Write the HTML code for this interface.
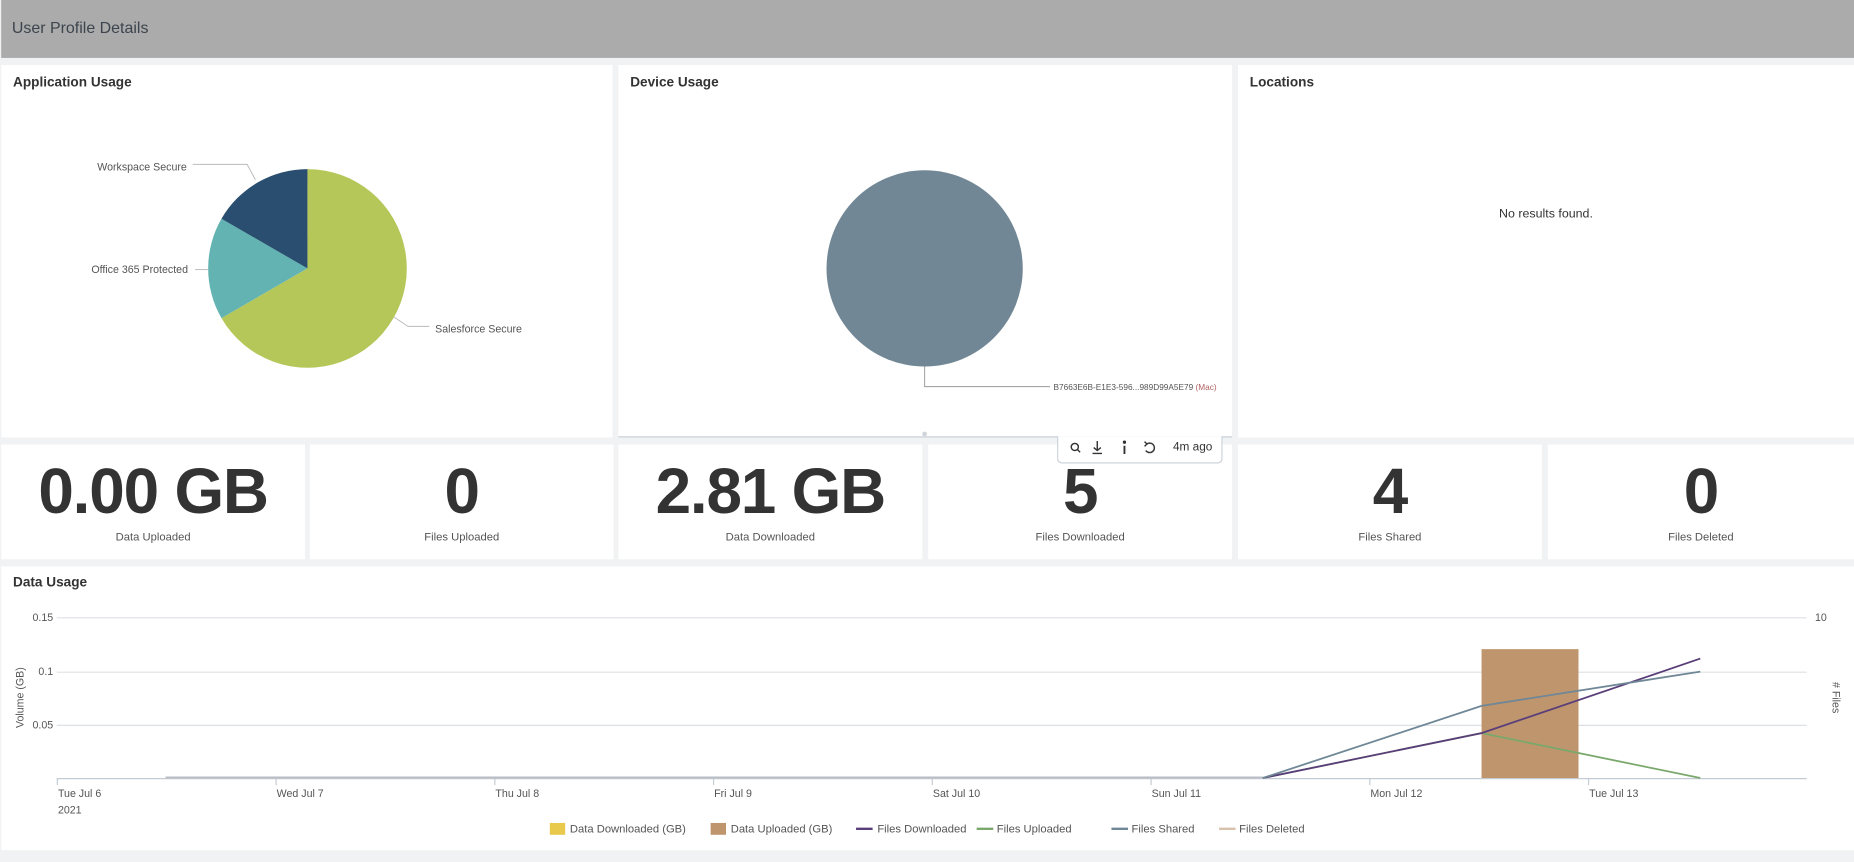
<!DOCTYPE html>
<html><head><meta charset="utf-8"><style>
html,body{margin:0;padding:0;width:1854px;height:862px;overflow:hidden;background:#f1f2f3;font-family:"Liberation Sans",sans-serif;}
#s{position:absolute;left:0;top:0;width:1568px;height:729px;transform:scale(1.18240);transform-origin:0 0;background:#f1f2f3;}
.p{position:absolute;background:#fff;}
.t{position:absolute;left:10px;top:9px;font-size:11.5px;font-weight:bold;color:#333;}
.big{position:absolute;left:0;right:0;top:380px;text-align:center;font-size:54px;font-weight:bold;color:#333;letter-spacing:-1px;}
.lab{position:absolute;left:0;right:0;text-align:center;font-size:9.5px;color:#555;}
</style></head><body><div id="s">
<div style="position:absolute;left:1px;top:0;width:1567px;height:49px;background:#ababab;"></div>
<div style="position:absolute;left:10px;top:16px;font-size:13.5px;color:#3c444d;">User Profile Details</div>

<div class="p" style="left:1px;top:55px;width:517px;height:315px;"><div class="t">Application Usage</div></div>
<div class="p" style="left:523px;top:55px;width:519px;height:315px;"><div class="t">Device Usage</div></div>
<div class="p" style="left:1047px;top:55px;width:521px;height:315px;"><div class="t">Locations</div>
<div style="position:absolute;left:0;right:0;top:120px;text-align:center;font-size:10.5px;color:#333;">No results found.</div></div>

<svg style="position:absolute;left:0;top:0" width="1568" height="729">
<path d="M260,227 L260,143 A84,84 0 1 1 187.3,269 Z" fill="#b6c75a"/>
<path d="M260,227 L187.3,269 A84,84 0 0 1 187.3,185 Z" fill="#62b3b2"/>
<path d="M260,227 L187.3,185 A84,84 0 0 1 260,143 Z" fill="#294e70"/>
<polyline points="163,139 209,139 216,152" fill="none" stroke="#bbb" stroke-width="0.8"/>
<polyline points="165,228 176,228" fill="none" stroke="#bbb" stroke-width="0.8"/>
<polyline points="333,268 345,276 363,276" fill="none" stroke="#bbb" stroke-width="0.8"/>
<g font-family="Liberation Sans" font-size="9" fill="#555">
<text x="158" y="144" text-anchor="end">Workspace Secure</text>
<text x="159" y="231" text-anchor="end">Office 365 Protected</text>
<text x="368" y="281">Salesforce Secure</text>
</g>
<circle cx="782" cy="227" r="83" fill="#728795"/>
<polyline points="782,310 782,327 888,327" fill="none" stroke="#999" stroke-width="0.8"/>
<text x="891" y="330" font-family="Liberation Sans" font-size="7" fill="#555">B7663E6B-E1E3-596...989D99A5E79 <tspan fill="#b06060">(Mac)</tspan></text>
<line x1="523" y1="369.5" x2="1042" y2="369.5" stroke="#c8d0d8" stroke-width="1"/>
<circle cx="782" cy="367" r="2" fill="#d0d5da"/>
</svg>

<div class="p" style="left:1px;top:376px;width:257px;height:97px;"></div>
<div class="p" style="left:262px;top:376px;width:257px;height:97px;"></div>
<div class="p" style="left:523px;top:376px;width:257px;height:97px;"></div>
<div class="p" style="left:785px;top:376px;width:257px;height:97px;"></div>
<div class="p" style="left:1047px;top:376px;width:257px;height:97px;"></div>
<div class="p" style="left:1309px;top:376px;width:259px;height:97px;"></div>

<div class="big" style="left:1px;width:257px;right:auto;top:385px;">0.00 GB</div>
<div class="big" style="left:262px;width:257px;right:auto;top:385px;">0</div>
<div class="big" style="left:523px;width:257px;right:auto;top:385px;">2.81 GB</div>
<div class="big" style="left:785px;width:257px;right:auto;top:385px;">5</div>
<div class="big" style="left:1047px;width:257px;right:auto;top:385px;">4</div>
<div class="big" style="left:1309px;width:259px;right:auto;top:385px;">0</div>
<div class="lab" style="left:1px;width:257px;right:auto;top:449px;">Data Uploaded</div>
<div class="lab" style="left:262px;width:257px;right:auto;top:449px;">Files Uploaded</div>
<div class="lab" style="left:523px;width:257px;right:auto;top:449px;">Data Downloaded</div>
<div class="lab" style="left:785px;width:257px;right:auto;top:449px;">Files Downloaded</div>
<div class="lab" style="left:1047px;width:257px;right:auto;top:449px;">Files Shared</div>
<div class="lab" style="left:1309px;width:259px;right:auto;top:449px;">Files Deleted</div>

<div style="position:absolute;left:894px;top:369px;width:138px;height:22px;background:#fff;border:1px solid #c8d0d8;border-top:none;border-radius:0 0 4px 4px;font-size:10px;color:#333;">
<svg style="position:absolute;left:0;top:0" width="100" height="22" fill="none" stroke="#333" stroke-width="1.2">
<circle cx="14" cy="9" r="3"/><line x1="16" y1="11" x2="18.5" y2="13.5"/>
<line x1="33" y1="4" x2="33" y2="12"/><polyline points="30,9.5 33,12 36,9.5"/><line x1="29" y1="14.5" x2="37" y2="14.5"/>
<line x1="56" y1="8" x2="56" y2="15" stroke-width="1.6"/><circle cx="56" cy="5" r="0.8" fill="#333"/>
<path d="M75,6.5 A4,4 0 1 1 74,12" /><polyline points="73,4.5 75,6.5 73,8.5"/>
</svg>
<span style="position:absolute;left:97px;top:4px;">4m ago</span></div>

<div class="p" style="left:1px;top:479px;width:1567px;height:240px;"><div class="t" style="top:8px;">Data Usage</div></div>
<svg style="position:absolute;left:0;top:0" width="1568" height="729" font-family="Liberation Sans">
<g stroke="#dde1e5" stroke-width="1">
<line x1="48" y1="522.5" x2="1528" y2="522.5"/><line x1="48" y1="568.5" x2="1528" y2="568.5"/><line x1="48" y1="613.5" x2="1528" y2="613.5"/>
</g>
<line x1="48" y1="658.5" x2="1528" y2="658.5" stroke="#c3cbd3"/>
<g stroke="#c3cbd3"><line x1="48.5" y1="658" x2="48.5" y2="664"/><line x1="233.5" y1="658" x2="233.5" y2="664"/><line x1="418.5" y1="658" x2="418.5" y2="664"/><line x1="603.5" y1="658" x2="603.5" y2="664"/><line x1="788.5" y1="658" x2="788.5" y2="664"/><line x1="973.5" y1="658" x2="973.5" y2="664"/><line x1="1158.5" y1="658" x2="1158.5" y2="664"/><line x1="1343.5" y1="658" x2="1343.5" y2="664"/></g>
<g font-size="9" fill="#555">
<text x="45" y="525" text-anchor="end">0.15</text><text x="45" y="571" text-anchor="end">0.1</text><text x="45" y="616" text-anchor="end">0.05</text>
<text x="1535" y="525">10</text>
<text x="49" y="674">Tue Jul 6</text><text x="49" y="688">2021</text>
<text x="234" y="674">Wed Jul 7</text><text x="419" y="674">Thu Jul 8</text><text x="604" y="674">Fri Jul 9</text><text x="789" y="674">Sat Jul 10</text><text x="974" y="674">Sun Jul 11</text><text x="1159" y="674">Mon Jul 12</text><text x="1344" y="674">Tue Jul 13</text>
<text transform="translate(20,590) rotate(-90)" text-anchor="middle">Volume (GB)</text>
<text transform="translate(1550,590) rotate(90)" text-anchor="middle">&#35; Files</text>
</g>
<rect x="1253" y="549" width="82" height="109" fill="#bf956d"/>
<line x1="140" y1="657.5" x2="1068" y2="657.5" stroke="#b8bcc4" stroke-width="1.5"/>
<polyline points="1068,658 1253,620 1438,658" fill="none" stroke="#7aa86c" stroke-width="1.5"/>
<polyline points="1068,658 1253,620 1438,557" fill="none" stroke="#5a3e7a" stroke-width="1.5"/>
<polyline points="1068,658 1253,597 1438,568" fill="none" stroke="#6f8796" stroke-width="1.5"/>
<g font-size="9.5" fill="#555">
<rect x="465" y="696" width="13" height="10" fill="#e9c94c"/><text x="482" y="704">Data Downloaded (GB)</text>
<rect x="601" y="696" width="13" height="10" fill="#bf956d"/><text x="618" y="704">Data Uploaded (GB)</text>
<line x1="724" y1="701" x2="738" y2="701" stroke="#5a3e7a" stroke-width="2"/><text x="742" y="704">Files Downloaded</text>
<line x1="826" y1="701" x2="840" y2="701" stroke="#7aa86c" stroke-width="2"/><text x="843" y="704">Files Uploaded</text>
<line x1="940" y1="701" x2="954" y2="701" stroke="#6f8796" stroke-width="2"/><text x="957" y="704">Files Shared</text>
<line x1="1031" y1="701" x2="1045" y2="701" stroke="#d8c2ad" stroke-width="2"/><text x="1048" y="704">Files Deleted</text>
</g>
</svg>
</div></body></html>
